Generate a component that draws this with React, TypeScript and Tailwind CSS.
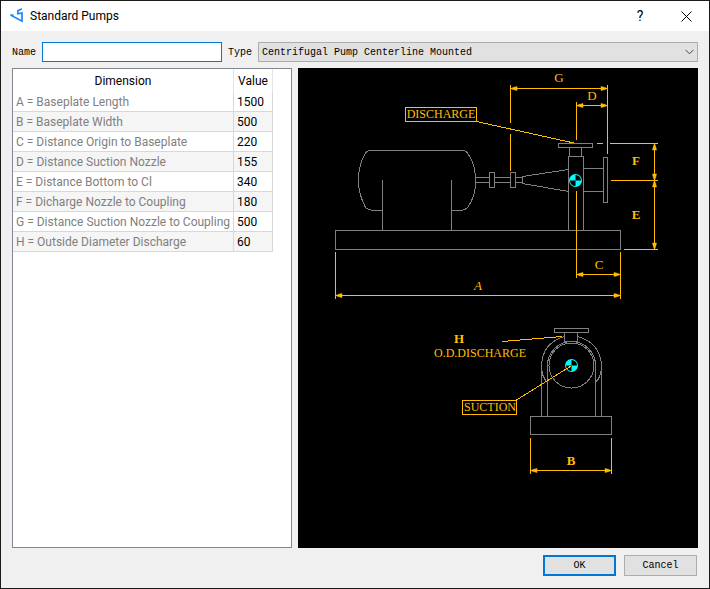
import { useState } from "react";

const dimensions = [
  ["A = Baseplate Length", "1500"],
  ["B = Baseplate Width", "500"],
  ["C = Distance Origin to Baseplate", "220"],
  ["D = Distance Suction Nozzle", "155"],
  ["E = Distance Bottom to Cl", "340"],
  ["F = Dicharge Nozzle to Coupling", "180"],
  ["G = Distance Suction Nozzle to Coupling", "500"],
  ["H = Outside Diameter Discharge", "60"],
];

function AppLogo() {
  return (
    <svg className="size-4" viewBox="0 0 16 16" fill="none" stroke="#1a86fb" strokeWidth="1.7" aria-hidden="true">
      <path d="M12.8 0.8 L8.8 2.8 L8.8 5.8 L13 5 L13 13.2 L1.5 7 L4.5 7" />
    </svg>
  );
}

/* Filled arrow head with its tip at x, y */
function Arrow({ x, y, dir }: { x: number; y: number; dir: "left" | "right" | "up" | "down" }) {
  const angle = { right: 0, down: 90, left: 180, up: 270 }[dir];
  return (
    <path
      d="M0 0 L-2 -1 L-6 -2 L-6 2 L-2 1 Z"
      fill="#ffbf00"
      stroke="#ffbf00"
      strokeWidth="0.5"
      transform={`translate(${x} ${y}) rotate(${angle})`}
    />
  );
}

/* Centre-of-gravity symbol: two cyan and two black quadrants */
function Origin({ x, y }: { x: number; y: number }) {
  return (
    <g transform={`translate(${x} ${y})`} stroke="none">
      <circle r="6.5" fill="#00ffff" />
      <path d="M0 0 V-5.5 A5.5 5.5 0 0 1 5.5 0 Z M0 0 V5.5 A5.5 5.5 0 0 1 -5.5 0 Z" fill="#000" />
    </g>
  );
}

function PumpDrawing() {
  return (
    <svg className="h-[480px] w-full" viewBox="0 0 400 480" role="img" aria-label="Centrifugal pump dimensions" fill="none">
      <g stroke="#808080" shapeRendering="crispEdges">
        {/* side view */}
        <rect x="37.5" y="162.5" width="285" height="19" />
        <path d="M84.5 142.5 H76.5 Q70 142 67.5 139.5 C63 131 60.5 123 60.5 112.5 C60.5 103 63 92 67.5 85 Q69 82.5 71.5 82.5 H164 Q168 82.5 169.5 85 Q174 91 176 99 Q177.5 105 177.5 112.5 Q177.5 122 175.5 128 Q173 135 169.5 139.5 Q167 142 163.5 142.5 H153.5" />
        <path d="M84.5 112 V162 M153.5 112 V162" />
        <path d="M177.5 109.5 H191.5 M177.5 114.5 H191.5 M196.5 109.5 H212.5 M196.5 114.5 H212.5 M217.5 109.5 H224.5 M217.5 114.5 H224.5" />
        <rect x="191.5" y="104.5" width="5" height="15" />
        <rect x="212.5" y="104.5" width="5" height="15" />
        <path d="M270.5 101.5 L224.5 108.5 V115.5 L270.5 123.5" />
        <rect x="270.5" y="88.5" width="15" height="74" />
        <rect x="271.5" y="79.5" width="12" height="9" />
        <rect x="260.5" y="75.5" width="34" height="4" />
        <path d="M285.5 100.5 H305.5 M285.5 123.5 H305.5" />
        <rect x="305.5" y="89.5" width="4" height="45" />
        {/* end view */}
        <rect x="256.5" y="260.5" width="34" height="4" />
        <path d="M266.5 264.5 V274 M279.5 264.5 V274 M266.5 273.5 H279.5" />
        <circle cx="273.5" cy="297.5" r="22.5" />
        <path d="M249.5 348 V297.5 A24 24 0 0 1 297.5 297.5 V348" />
        <path d="M243.5 348 V297.5 Q244.5 275 266.5 268.5 M279.5 268.5 Q302.5 275 303.5 297.5 V348" />
        <path d="M243.5 297.5 Q243.5 309 249.5 314.5 M303.5 297.5 Q303.5 309 297.5 314.5" />
        <rect x="232.5" y="348.5" width="81" height="18" />
      </g>

      <Origin x={277.5} y={112.5} />
      <Origin x={273.5} y={297.5} />

      <g stroke="#ffbf00" shapeRendering="crispEdges">
        <path d="M212.5 17 V55 M212.5 66 V103 M212.5 20.5 H309.5 M309.5 17 V86" />
        <path d="M278.5 34 V72 M278.5 37.5 H309.5 M278.5 123 V210" />
        <path d="M299 75.5 H305 M312 75.5 H360 M313 112.5 H360 M326 181.5 H360 M356.5 75.5 V181.5" />
        <path d="M278.5 206.5 H322.5 M322.5 184 V231 M37.5 184 V231 M37.5 227.5 H322.5" />
        <path d="M232.5 370 V406 M313.5 370 V406 M232.5 402.5 H313.5" />
        <rect x="107.5" y="39.5" width="71" height="14" />
        <rect x="164.5" y="332.5" width="54" height="14" />
        <path d="M178.5 53.5 L276 75 M218.5 332 L273 298 M204.5 273.5 L264.5 268.5" />
      </g>
      <Arrow x={213} y={20.5} dir="left" />
      <Arrow x={309} y={20.5} dir="right" />
      <Arrow x={279} y={37.5} dir="left" />
      <Arrow x={309} y={37.5} dir="right" />
      <Arrow x={356.5} y={76} dir="up" />
      <Arrow x={356.5} y={112} dir="down" />
      <Arrow x={356.5} y={113} dir="up" />
      <Arrow x={356.5} y={181} dir="down" />
      <Arrow x={279} y={206.5} dir="left" />
      <Arrow x={322} y={206.5} dir="right" />
      <Arrow x={38} y={227.5} dir="left" />
      <Arrow x={322} y={227.5} dir="right" />
      <Arrow x={233} y={402.5} dir="left" />
      <Arrow x={313} y={402.5} dir="right" />

      <g fill="#ffbf00" className="font-['Liberation_Serif',serif] text-[13px]" textAnchor="middle">
        <text x="261" y="14">G</text>
        <text x="294" y="32">D</text>
        <text x="338" y="97" className="font-bold">F</text>
        <text x="338" y="151" className="font-bold">E</text>
        <text x="301" y="201">C</text>
        <text x="180" y="222" className="italic">A</text>
        <text x="273" y="397" className="font-bold">B</text>
        <text x="161" y="275" className="font-bold">H</text>
        <text x="143" y="50" className="text-[12px]">DISCHARGE</text>
        <text x="182" y="289" className="text-[12px]">O.D.DISCHARGE</text>
        <text x="192" y="343" className="text-[12px]">SUCTION</text>
      </g>
    </svg>
  );
}

export default function App() {
  const [name, setName] = useState("");
  return (
    <div className="flex min-h-screen flex-col border border-[#1a1a1a] bg-[#f0f0f0] font-['Liberation_Mono',monospace] text-[10px] text-black">
      <header className="flex h-[30px] items-center bg-white pl-2 font-['Roboto',sans-serif] text-[12px]">
        <AppLogo />
        <h1 className="ml-1 flex-1 pl-px">Standard Pumps</h1>
        <button aria-label="Help" className="flex h-full w-[46px] items-center justify-center text-[14px]">?</button>
        <button aria-label="Close" className="flex h-full w-[46px] items-center justify-center">
          <svg className="size-[11px]" viewBox="0 0 11 11" stroke="#000" aria-hidden="true">
            <path d="M0.5 0.5 L10.5 10.5 M10.5 0.5 L0.5 10.5" />
          </svg>
        </button>
      </header>

      <main className="flex flex-1 flex-col px-[11px] pt-[11px] pb-3">
        <div className="flex items-center">
          <label htmlFor="name" className="w-[30px]">Name</label>
          <input
            id="name"
            value={name}
            onChange={(e) => setName(e.target.value)}
            className="h-5 w-[180px] border border-[#0078d7] bg-white px-1 outline-none"
          />
          <label htmlFor="type" className="w-9 pl-1.5">Type</label>
          <div className="relative flex-1">
            <select id="type" className="block h-5 w-full appearance-none border border-[#adadad] bg-[#e1e1e1] pl-[3px] outline-none">
              <option>Centrifugal Pump Centerline Mounted</option>
            </select>
            <svg className="pointer-events-none absolute top-[7px] right-1 h-[6px] w-[9px]" viewBox="0 0 9 6" fill="none" stroke="#444" aria-hidden="true">
              <path d="M0.5 0.8 L4.5 4.8 L8.5 0.8" />
            </svg>
          </div>
        </div>

        <div className="mt-1.5 flex flex-1 gap-1.5">
          <section className="w-[280px] shrink-0 border border-[#828790] bg-white">
            <table className="w-[260px] table-fixed border-separate border-spacing-0 font-['Roboto',sans-serif] text-[12px] leading-[17px]">
              <colgroup>
                <col className="w-[221px]" />
                <col className="w-[39px]" />
              </colgroup>
              <thead>
                <tr className="h-[23px]">
                  <th className="border-r border-[#e5e5e5] p-0 pt-0.5 font-normal">Dimension</th>
                  <th className="border-r border-[#e5e5e5] p-0 pt-0.5 font-normal">Value</th>
                </tr>
              </thead>
              <tbody>
                {dimensions.map(([label, value]) => (
                  <tr key={label} className="h-5 even:bg-[#f5f5f5]">
                    <td className="border-r border-b border-[#d8d8d8] p-0 pt-0.5 pl-[3px] whitespace-nowrap text-[#808080]">{label}</td>
                    <td className="border-r border-b border-[#d8d8d8] p-0 pt-0.5 pl-[3px]">{value}</td>
                  </tr>
                ))}
              </tbody>
            </table>
          </section>
          <section className="min-w-0 flex-1 bg-black">
            <PumpDrawing />
          </section>
        </div>

        <footer className="mt-[7px] flex justify-end gap-2 pr-px">
          <button className="h-[21px] w-[73px] border-2 border-[#0078d7] bg-[#e1e1e1]">OK</button>
          <button className="h-[21px] w-[73px] border border-[#adadad] bg-[#e1e1e1]">Cancel</button>
        </footer>
      </main>
    </div>
  );
}
